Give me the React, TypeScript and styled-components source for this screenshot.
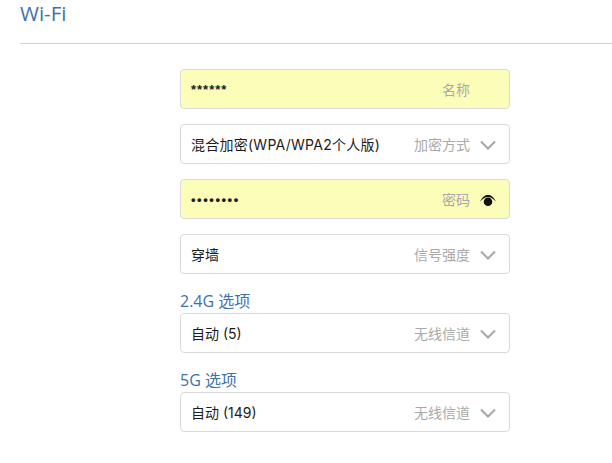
import { createGlobalStyle } from "styled-components";
import styled from "styled-components";

const GlobalStyle = createGlobalStyle`
	html, body {
		margin: 0;
		padding: 0;
		background: #ffffff;
		overflow: hidden;
	}
	body {
		font-family: "Inter", "Noto Sans CJK SC", sans-serif;
	}
`;

const Page = styled.div`
	width: 612px;
	height: 463px;
	overflow: hidden;
`;

const Header = styled.header`
	height: 43px;
	margin-left: 20px;
	border-bottom: 1px solid #d4d4d4;
`;

const Title = styled.h1`
	margin: 0;
	font-family: "Open Sans", sans-serif;
	font-size: 20.5px;
	font-weight: 400;
	line-height: 26px;
	color: #3e72a8;
`;

const Form = styled.div`
	display: flex;
	flex-direction: column;
	width: 330px;
	margin: 25px 0 0 180px;
`;

const Row = styled.div<{ $filled?: boolean; $gap?: number }>`
	display: flex;
	align-items: center;
	box-sizing: border-box;
	height: 40px;
	margin-bottom: ${(p) => p.$gap ?? 15}px;
	padding: 0 13px 0 10px;
	background: ${(p) => (p.$filled ? "#fbfdb9" : "#ffffff")};
	border: 1px solid #dadada;
	border-radius: 4px;
`;

const Value = styled.span<{ $tracking?: number }>`
	flex: 1;
	font-size: 14px;
	letter-spacing: ${(p) => p.$tracking ?? 0}px;
	color: #1c1c1c;
	white-space: nowrap;
`;

const Secret = styled(Value)`
	font-family: "Liberation Sans", sans-serif;
	font-size: 13px;
	font-weight: 700;
`;

const Hint = styled.span`
	font-size: 14px;
	color: #a9a9a9;
	white-space: nowrap;
`;

const IconSlot = styled.span`
	display: flex;
	justify-content: center;
	width: 16px;
	margin-left: 10px;
	padding-top: 2px;
`;

const NameHint = styled(Hint)`
	margin-right: 26px;
`;

const SectionLabel = styled.div`
	height: 20px;
	margin-top: -2px;
	margin-bottom: 2px;
	font-family: "Open Sans", "Noto Sans CJK SC", sans-serif;
	font-size: 16px;
	line-height: 20px;
	color: #3e72a8;
`;

const Chevron = () => (
	<svg width="16" height="10" viewBox="0 0 16 10" fill="none">
		<path d="M1 1.5 L8 8.5 L15 1.5" stroke="#a6a6a6" strokeWidth="2" />
	</svg>
);

const Eye = () => (
	<svg width="18" height="13" viewBox="0 0 18 13">
		<path d="M0 7.8 C2.8 2.2 5.8 0.3 9 0.3 C12.2 0.3 15.2 2.2 18 7.8 C15 4.6 12.2 2.6 9 2.6 C5.8 2.6 3 4.6 0 7.8 Z" fill="#111111" />
		<circle cx="9" cy="7.8" r="4.8" fill="#111111" />
	</svg>
);

const SelectRow = ({ value, hint, gap, tracking }: { value: string; hint: string; gap?: number; tracking?: number }) => (
	<Row $gap={gap}>
		<Value $tracking={tracking}>{value}</Value>
		<Hint>{hint}</Hint>
		<IconSlot>
			<Chevron />
		</IconSlot>
	</Row>
);

export default function App() {
	return (
		<Page>
			<GlobalStyle />
			<Header>
				<Title>Wi-Fi</Title>
			</Header>
			<Form>
				<Row $filled>
					<Secret $tracking={1}>******</Secret>
					<NameHint>名称</NameHint>
				</Row>
				<SelectRow value="混合加密(WPA/WPA2个人版)" hint="加密方式" tracking={0.25} />
				<Row $filled>
					<Secret $tracking={1.55}>••••••••</Secret>
					<Hint>密码</Hint>
					<IconSlot>
						<Eye />
					</IconSlot>
				</Row>
				<SelectRow value="穿墙" hint="信号强度" gap={19} />
				<SectionLabel>2.4G 选项</SectionLabel>
				<SelectRow value="自动 (5)" hint="无线信道" gap={19} />
				<SectionLabel>5G 选项</SectionLabel>
				<SelectRow value="自动 (149)" hint="无线信道" />
			</Form>
		</Page>
	);
}
